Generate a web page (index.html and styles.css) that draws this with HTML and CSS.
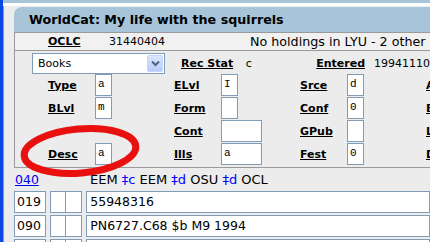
FILE: index.html
```html
<!doctype html>
<html lang="en">
  <head>
    <meta charset="UTF-8" />
    <title>WorldCat: My life with the squirrels</title>
    <link rel="stylesheet" href="styles.css">
  </head>
  <body>
    <div class="window">
      <div class="topstrip"></div>
      <div class="record">
        <div class="titlebar">WorldCat: My life with the squirrels</div>

        <div class="panel">
          <div class="idrow">
            <span class="lbl id-lbl">OCLC</span>
            <span class="id-num">31440404</span>
            <span class="holdings">No holdings in LYU - 2 other</span>
          </div>

          <div class="typerow">
            <div class="select">
              <span>Books</span>
              <span class="arrow">
                <svg width="9" height="7" viewBox="0 0 9 7"><path d="M1 1.5 L4.5 5 L8 1.5" fill="none" stroke="#4d6185" stroke-width="2"/></svg>
              </span>
            </div>
            <span class="lbl rec-lbl">Rec Stat</span>
            <span class="rec-val">c</span>
            <span class="lbl ent-lbl">Entered</span>
            <span class="ent-val">19941110</span>
          </div>

          <div class="fixed">
            <div class="cell"><span class="lbl">Type</span><span class="box">a</span></div>
            <div class="cell"><span class="lbl">ELvl</span><span class="box">I</span></div>
            <div class="cell"><span class="lbl">Srce</span><span class="box">d</span></div>
            <div class="cell"><span class="lbl">Audn</span></div>

            <div class="cell"><span class="lbl">BLvl</span><span class="box">m</span></div>
            <div class="cell"><span class="lbl">Form</span><span class="box"></span></div>
            <div class="cell"><span class="lbl">Conf</span><span class="box">0</span></div>
            <div class="cell"><span class="lbl">Biog</span></div>

            <div class="cell"></div>
            <div class="cell"><span class="lbl">Cont</span><span class="box wide"></span></div>
            <div class="cell"><span class="lbl">GPub</span><span class="box"></span></div>
            <div class="cell"><span class="lbl">LitF</span></div>

            <div class="cell"><span class="lbl">Desc</span><span class="box">a</span></div>
            <div class="cell"><span class="lbl">Ills</span><span class="box wide">a</span></div>
            <div class="cell"><span class="lbl">Fest</span><span class="box">0</span></div>
            <div class="cell"><span class="lbl">DtSt</span></div>
          </div>
        </div>

        <div class="subrow">
          <a class="tag-link" href="#">040</a>
          <span class="subfields">EEM <span class="delim">&Dagger;c</span> EEM <span class="delim">&Dagger;d</span> OSU <span class="delim">&Dagger;d</span> OCL</span>
        </div>

        <div class="field">
          <span class="tag">019</span>
          <span class="ind"></span><span class="ind"></span>
          <span class="content">55948316</span>
        </div>
        <div class="field">
          <span class="tag">090</span>
          <span class="ind"></span><span class="ind"></span>
          <span class="content">PN6727.C68 $b M9 1994</span>
        </div>
        <div class="field">
          <span class="tag">100</span>
          <span class="ind"></span><span class="ind"></span>
          <span class="content"></span>
        </div>
      </div>

      <!-- hand drawn highlight -->
      <svg class="mark" width="430" height="242" viewBox="0 0 430 242">
        <ellipse cx="80" cy="151" rx="56" ry="22" fill="none" stroke="#e8110f" stroke-width="7" transform="rotate(-5 80 151)"/>
      </svg>
    </div>
  </body>
</html>
```

FILE: styles.css
```css
body {
  margin: 0;
  background: #ececec;
  font-family: "DejaVu Sans", Verdana, sans-serif;
  font-size: 11px;
  color: #000;
  overflow: hidden;
}
.window {
  position: relative;
  width: 427px;
  height: 242px;
  border-left: 3px solid #0c46e4;
  box-shadow: inset 1px 0 #6f9bf2;
  overflow: hidden;
}
.topstrip {
  height: 3px;
  background: #a8c4d8;
  border-bottom: 3px solid #fff;
  margin-bottom: 1px;
}
.record {
  margin-left: 11px;
}
.titlebar {
  height: 25px;
  line-height: 26px;
  padding-left: 15px;
  background: #a8c4d8;
  border-top-left-radius: 8px;
  font-weight: bold;
  font-size: 12.7px;
  white-space: nowrap;
}
.panel {
  border-top: 1px solid #9a9a9a;
  border-left: 1px solid #9a9a9a;
  border-bottom: 1px solid #9a9a9a;
  padding-bottom: 2px;
}
.lbl {
  font-weight: bold;
  text-decoration: underline;
  white-space: nowrap;
}
.idrow {
  display: flex;
  align-items: center;
  height: 17px;
  padding-left: 33px;
  background: #f1f1f1;
  border-bottom: 1px solid #9a9a9a;
  white-space: nowrap;
}
.id-lbl {
  width: 61px;
  flex: none;
}
.id-num {
  width: 141px;
  flex: none;
}
.holdings {
  font-size: 12.7px;
}
.typerow {
  display: flex;
  align-items: center;
  height: 21px;
  padding-top: 2px;
  padding-left: 17px;
  white-space: nowrap;
}
.select {
  display: flex;
  align-items: center;
  justify-content: space-between;
  box-sizing: border-box;
  width: 133px;
  height: 21px;
  padding-left: 5px;
  padding-right: 1px;
  background: #fff;
  border: 1px solid #7f9db9;
  flex: none;
}
.arrow {
  display: flex;
  align-items: center;
  justify-content: center;
  box-sizing: border-box;
  width: 16px;
  height: 17px;
  background: linear-gradient(#dbe6fd, #b8cbf8);
  border: 1px solid #c3d3fd;
  border-radius: 2px;
}
.rec-lbl {
  margin-left: 16px;
  width: 66px;
}
.rec-val {
  width: 72px;
}
.ent-lbl {
  width: 59px;
}
.fixed {
  display: grid;
  grid-template-columns: repeat(4, 126px);
  grid-auto-rows: 22px;
  row-gap: 1px;
  padding-left: 33px;
}
.cell {
  display: flex;
  align-items: center;
  white-space: nowrap;
}
.cell .lbl {
  width: 47px;
  flex: none;
}
.box {
  box-sizing: border-box;
  width: 17px;
  height: 22px;
  padding: 2px 0 0 2px;
  background: #fff;
  border: 1px solid #7f9db9;
  font-family: "Liberation Mono", "DejaVu Sans Mono", monospace;
  font-size: 11px;
  line-height: 14px;
}
.box.wide {
  width: 41px;
}
.subrow {
  display: flex;
  align-items: center;
  height: 23px;
  padding-left: 1px;
  white-space: nowrap;
}
.tag-link {
  color: #0000ee;
  width: 75px;
  font-size: 12.5px;
}
.subfields {
  font-size: 13px;
}
.delim {
  color: #0000ff;
}
.field {
  display: flex;
  height: 22px;
  margin-bottom: 2px;
  font-size: 12.5px;
}
.field span {
  box-sizing: border-box;
  height: 22px;
  line-height: 20px;
  background: #fff;
  border: 1px solid #7f9db9;
  white-space: nowrap;
}
.field .tag {
  width: 33px;
  padding-left: 2px;
  margin-right: 4px;
}
.field .ind {
  width: 17px;
}
.field .ind + .ind {
  width: 18px;
  margin-left: -1px;
}
.field .content {
  width: 360px;
  margin-left: 4px;
  padding-left: 3px;
}
.mark {
  position: absolute;
  left: -3px;
  top: 0;
  pointer-events: none;
}
```
